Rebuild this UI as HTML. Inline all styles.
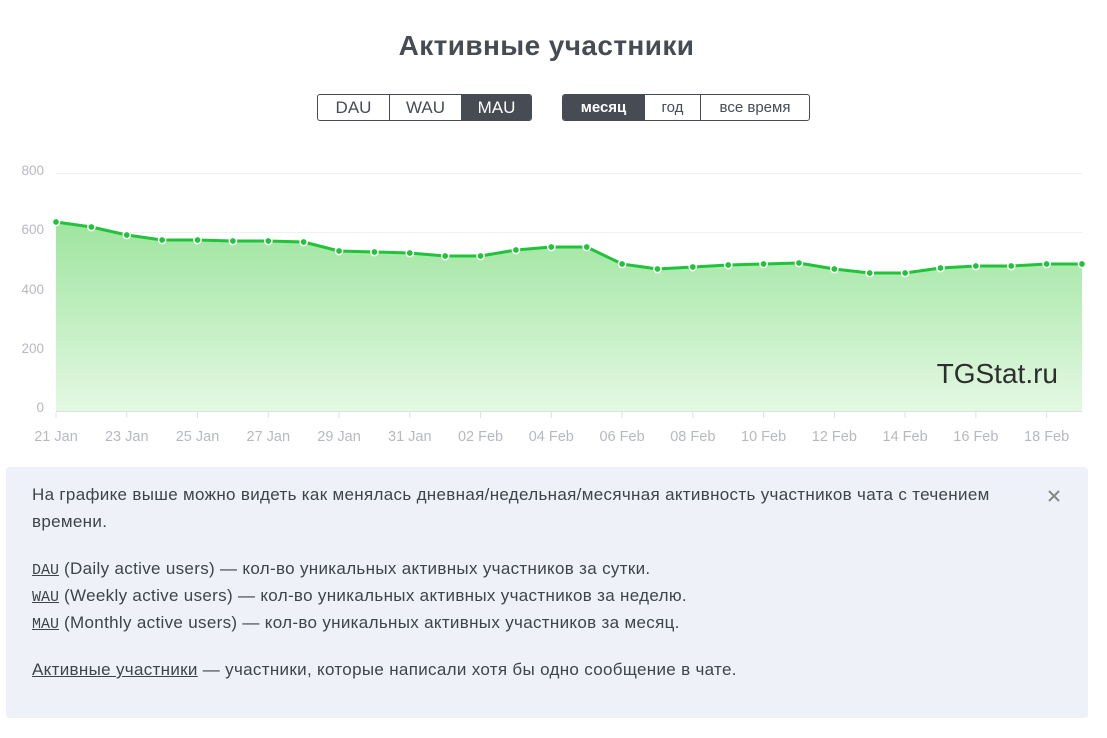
<!DOCTYPE html>
<html><head><meta charset="utf-8"><style>
body{margin:0;background:#fff;width:1107px;height:738px;overflow:hidden;font-family:"Liberation Sans",sans-serif;position:relative}
h1{position:absolute;top:30px;left:0;width:1093px;text-align:center;margin:0;font-size:28px;font-weight:bold;color:#474b53;letter-spacing:0.4px}
.grp{position:absolute;top:94px;height:25px;display:flex;border:1px solid #474b53;border-radius:3px;overflow:hidden}
.grp div{height:25px;line-height:25px;text-align:center;color:#474b53;border-left:1px solid #474b53;box-sizing:border-box}
.grp div:first-child{border-left:none}
.grp .on{background:#474b53;color:#fff}
.box{position:absolute;left:6px;top:467px;width:1082px;height:251px;background:#eef1f8;border-radius:3px}
.t{position:absolute;left:32px;font-size:17px;letter-spacing:0.32px;color:#3f434b;white-space:nowrap}
.u{text-decoration:underline}
.m{font-family:"Liberation Mono",monospace;font-size:15px;letter-spacing:0;text-decoration:underline}
</style></head><body>
<h1>Активные участники</h1>
<div class="grp" style="left:317px;width:213px;font-size:17px">
<div style="width:71px">DAU</div><div style="width:72px">WAU</div><div class="on" style="width:70px">MAU</div></div>
<div class="grp" style="left:562px;width:246px;font-size:15px">
<div class="on" style="width:81px;font-weight:bold">месяц</div><div style="width:56px">год</div><div style="width:109px">все время</div></div>
<svg width="1107" height="460" style="position:absolute;left:0;top:0">
<defs><linearGradient id="g" x1="0" y1="0" x2="0" y2="1"><stop offset="0" stop-color="#9ee59f"/><stop offset="1" stop-color="#e4f8e3"/></linearGradient></defs>
<g stroke="#f0f0f0" stroke-width="1"><line x1="56" x2="1082" y1="173.5" y2="173.5"/><line x1="56" x2="1082" y1="232.5" y2="232.5"/><line x1="56" x2="1082" y1="292.5" y2="292.5"/><line x1="56" x2="1082" y1="351.5" y2="351.5"/></g>
<g id="ch"></g>
<line x1="56" x2="1082" y1="411.5" y2="411.5" stroke="#e0e0e4"/>
<g font-size="13.5" fill="#b7b9c0" text-anchor="end"><text x="44" y="175">800</text><text x="44" y="234">600</text><text x="44" y="294">400</text><text x="44" y="353">200</text><text x="44" y="412">0</text></g>
<g id="xl" font-size="14.5" fill="#b7b9c0" text-anchor="middle"></g>
<text x="1058" y="383" font-size="28" fill="#2e2e2e" text-anchor="end">TGStat.ru</text>
</svg>
<script>
var ys=[222,227,235,240,240,241,241,242,251,252,253,256,256,250,247,247,264,269,267,265,264,263,269,273,273,268,266,266,264,264];
var x0=56,dx=(1082-56)/29,pts=ys.map((y,i)=>[x0+i*dx,y]);
var line=pts.map((p,i)=>(i?'L':'M')+p[0].toFixed(1)+' '+p[1]).join(' ');
var s='<path d="'+line+' L1082 411 L56 411 Z" fill="url(#g)"/>';
s+='<path d="'+line+'" fill="none" stroke="#21c33a" stroke-width="3" stroke-linejoin="round"/>';
pts.forEach(p=>{s+='<circle cx="'+p[0]+'" cy="'+p[1]+'" r="3.6" fill="#21c33a" stroke="#fff" stroke-width="1.5"/>'});
document.getElementById('ch').innerHTML=s;
var lab=['21 Jan','23 Jan','25 Jan','27 Jan','29 Jan','31 Jan','02 Feb','04 Feb','06 Feb','08 Feb','10 Feb','12 Feb','14 Feb','16 Feb','18 Feb'];
var t='';lab.forEach((l,i)=>{var x=x0+i*2*dx;t+='<line x1="'+x+'" x2="'+x+'" y1="412" y2="418" stroke="#e0e0e4"/><text x="'+x+'" y="441">'+l+'</text>'});
document.getElementById('xl').innerHTML=t;
</script>
<div class="box"></div>
<svg style="position:absolute;left:1048px;top:490px" width="12" height="12"><path d="M1 1L11 11M11 1L1 11" stroke="#888" stroke-width="2"/></svg>
<div class="t" style="top:485px">На графике выше можно видеть как менялась дневная/недельная/месячная активность участников чата с течением</div>
<div class="t" style="top:512px">времени.</div>
<div class="t" style="top:559px"><span class="m">DAU</span> (Daily active users) — кол-во уникальных активных участников за сутки.</div>
<div class="t" style="top:586px"><span class="m">WAU</span> (Weekly active users) — кол-во уникальных активных участников за неделю.</div>
<div class="t" style="top:613px"><span class="m">MAU</span> (Monthly active users) — кол-во уникальных активных участников за месяц.</div>
<div class="t" style="top:660px"><span class="u">Активные участники</span> — участники, которые написали хотя бы одно сообщение в чате.</div>
</body></html>
